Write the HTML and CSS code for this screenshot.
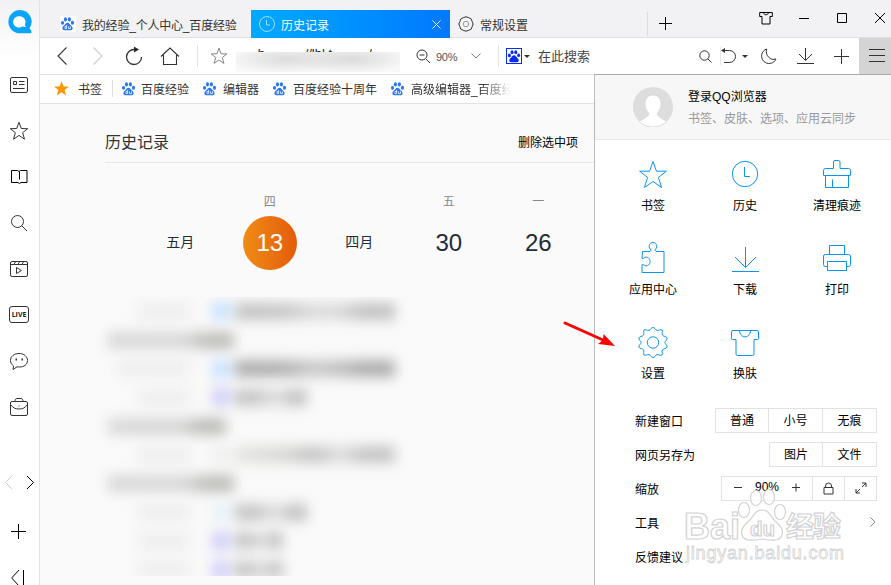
FILE: index.html
```
<!DOCTYPE html>
<html lang="zh-CN">
<head>
    <meta charset="UTF-8">
    <title>历史记录</title>
    <link rel="stylesheet" href="styles.css">
</head>
<body>
    <svg class="symbols" width="0" height="0">
        <symbol id="paw" viewBox="0 0 16 16">
            <ellipse cx="2.7" cy="7.3" rx="1.7" ry="2.1"/>
            <ellipse cx="5.8" cy="3.6" rx="1.7" ry="2.3"/>
            <ellipse cx="10" cy="3.6" rx="1.7" ry="2.3"/>
            <ellipse cx="13.3" cy="7.1" rx="1.7" ry="2.1"/>
            <path d="M8 7.2c-1.8 0-2.4 1.8-3.7 3-1.5 1.3-2 2.2-1.6 3.6.5 1.5 2 1.6 5.3 1.3 3.3.3 4.8.2 5.3-1.3.4-1.4-.1-2.3-1.6-3.6C10.400 9 9.800 7.200 8 7.200z"/>
        </symbol>
        <symbol id="du" viewBox="0 0 16 16">
            <use href="#paw"/>
            <path class="du-lines" d="M7 9.500v4M7 11.200H5.300v2.200H7M9 11v2.400h2.200V11"/>
        </symbol>
        <symbol id="star" viewBox="0 0 20 20">
            <path d="M10 1.300l2.300 6.200 6.400.2-5.100 4 1.900 6.500L10 14.400l-5.500 3.800 1.900-6.500-5.100-4 6.400-.2z"/>
        </symbol>
        <symbol id="magnifier" viewBox="0 0 18 18">
            <circle cx="7.500" cy="7.500" r="6"/>
            <path d="M12 12l5 5"/>
        </symbol>
    </svg>

    <div class="browser">
        <aside class="sidebar">
            <div class="side-logo">
                <svg width="24" height="24" viewBox="0 0 24 24">
                    <path d="M12 0a11.600 11.600 0 0 1 9.500 18.200c.3 1 .9 1.700 1.800 2V23.300H12A11.600 11.600 0 0 1 12 0z" fill="#0ba4f8"/>
                    <path d="M11.800 6.300a5.700 5.700 0 0 1 5 8.400c.2.900.7 1.500 1.500 2-1.300.4-2.600.2-3.800-.4A5.700 5.700 0 1 1 11.800 6.300z" fill="#fff"/>
                </svg>
            </div>
            <div class="side-item"><svg width="20" height="18" viewBox="0 0 20 18"><rect x="1.500" y="1.500" width="17" height="15" rx="1.500"/><path d="M4.500 5.500h3v3h-3zM10 5.500h5.500M10 8.500h5.500M4 12.500h11.500"/></svg></div>
            <div class="side-item"><svg width="20" height="20"><use href="#star"/></svg></div>
            <div class="side-item"><svg class="dark" width="20" height="18" viewBox="0 0 20 18"><path d="M2.500 2.500h6l1.500 1 1.500-1h6.500v12h-6l-1.500 1-1.500-1H2.500zM10.500 3.500v8"/></svg></div>
            <div class="side-item"><svg width="18" height="18"><use href="#magnifier"/></svg></div>
            <div class="side-item"><svg width="20" height="18" viewBox="0 0 20 18"><rect x="1.500" y="1.500" width="17" height="15" rx="1.500"/><path d="M2 4.500h16M5 4l1.500-2M9 4l1.500-2M13 4l1.500-2M7.500 7.500v6l5-3z"/></svg></div>
            <div class="side-item"><span class="live">LIVE</span></div>
            <div class="side-item"><svg width="20" height="20" viewBox="0 0 20 20"><path d="M4 18.500l.6-3.500C2.500 13.500 1.500 11.500 1.500 9.500c0-4 3.500-7 8.500-7s8.500 3 8.500 7-3.500 6.500-8 6.500c-1 0-2 0-2.500-.200z"/><path d="M6.500 8.500h1.500M12.500 8.500H14" stroke-width="1.800"/></svg></div>
            <div class="side-item"><svg width="20" height="20" viewBox="0 0 20 20"><rect x="1.500" y="4.500" width="17" height="14" rx="1.500"/><path d="M6 4.500c0-2 .7-3 2-3h4c1.300 0 2 1 2 3M2 8c2 3 4.500 4 8 4s6-1 8-4M10 8.500v1"/></svg></div>
            <div class="side-arrows">
                <svg class="pale" width="9" height="15" viewBox="0 0 9 15"><path d="M8 1L1.500 7.500 8 14"/></svg>
                <svg class="dark" width="9" height="15" viewBox="0 0 9 15"><path d="M1 1l6.500 6.500L1 14"/></svg>
            </div>
            <div class="side-item add"><svg class="dark" width="15" height="15" viewBox="0 0 15 15"><path d="M7.500 0v15M0 7.500h15"/></svg></div>
            <div class="side-item collapse"><svg class="dark" width="14" height="16" viewBox="0 0 14 16"><path d="M8 0L.700 8 8 16M12.500 0v16"/></svg></div>
        </aside>

        <main class="main">
            <header class="tabs">
                <div class="tab first">
                    <span class="fav"><svg width="15" height="15" class="blue-paw"><use href="#du"/></svg></span>
                    我的经验_个人中心_百度经验
                </div>
                <div class="tab active">
                    <svg width="18" height="18" viewBox="0 0 18 18"><circle cx="9" cy="9" r="7.500"/><path d="M8.500 5v5H12"/></svg>
                    <span>历史记录</span>
                    <svg class="close" width="9" height="9" viewBox="0 0 9 9"><path d="M.5.500l8 8M8.500.500l-8 8"/></svg>
                </div>
                <div class="tab third">
                    <svg width="16" height="16" viewBox="0 0 16 16"><path d="M5.200 1.700L8 .8l2.800.9 2.500 1.400.8 2.300 1.100 2.600-1.100 2.800-.8 2.200-2.500 1.300L8 15.200l-2.800-.9L2.700 13l-.8-2.200L.8 8l1.100-2.600.8-2.300z"/><circle class="inner" cx="8" cy="8" r="2.700"/></svg>
                    常规设置
                </div>
                <div class="new-tab"><svg width="13" height="13" viewBox="0 0 13 13"><path d="M6.500 0v13M0 6.500h13"/></svg></div>
                <div class="window-buttons">
                    <svg width="14" height="14" viewBox="0 0 14 14"><path d="M.700 1.500h12.600v4h-2.300v7.500H3V5.500H.700z"/><path d="M4.500 1.500c.5 3 4.500 3 5 0"/></svg>
                    <svg width="14" height="14" viewBox="0 0 14 14"><path d="M2 7.500h10"/></svg>
                    <svg width="14" height="14" viewBox="0 0 14 14"><path d="M2.500 2.500h9v9h-9z"/></svg>
                    <svg width="14" height="14" viewBox="0 0 14 14"><path d="M2 2l10 10M12 2L2 12"/></svg>
                </div>
            </header>

            <div class="toolbar">
                <div class="nav-btn"><svg width="12" height="18" viewBox="0 0 12 18"><path d="M10.500 .500L2 9l8.500 8.500"/></svg></div>
                <div class="nav-btn"><svg class="pale" width="12" height="18" viewBox="0 0 12 18"><path d="M1.500.500L10 9l-8.500 8.500"/></svg></div>
                <div class="nav-btn"><svg width="18" height="20" viewBox="0 0 18 20"><path d="M9.500 3.500a7.500 7.500 0 1 0 7 7.500" stroke-width="1.300"/><path d="M9.500 1.500l3.500 2-3.500 2z" fill="#111"/></svg></div>
                <div class="nav-btn"><svg width="20" height="18" viewBox="0 0 20 18"><path d="M1 9.500l9-8.500 9 8.500M3.500 8v9.500h13V8"/></svg></div>
                <div class="address">
                    <svg class="grey" width="18" height="18"><use href="#star"/></svg>
                    <div class="url"><span>&nbsp; &nbsp; &nbsp; b.......... //lbl.t......... /</span></div>
                    <svg width="15" height="15" viewBox="0 0 15 15"><circle cx="6" cy="6" r="5"/><path d="M10 10l4 4M3.500 6h5"/></svg>
                    <span class="percent">90%</span>
                    <svg class="grey" width="10" height="6" viewBox="0 0 10 6"><path d="M.500.500L5 5 9.500.500"/></svg>
                </div>
                <div class="search">
                    <span class="engine"><svg width="14" height="14"><use href="#paw"/></svg></span>
                    <span class="caret"></span>
                    <span class="hint">在此搜索</span>
                    <svg width="13" height="13" viewBox="0 0 13 13"><circle cx="5.500" cy="5.500" r="4.700"/><path d="M9 9l3.500 3.500"/></svg>
                </div>
                <div class="tools">
                    <svg width="16" height="16" viewBox="0 0 16 16"><path d="M2 2.500h6.500a5.800 5.800 0 0 1 0 12H3"/><path d="M0 2.500L4 0v5z" fill="#333" stroke="none"/></svg>
                    <span class="caret"></span>
                    <svg class="moon" width="17" height="17" viewBox="0 0 17 17"><path d="M6.500 1a7.500 7.500 0 1 0 9.500 10C10.500 13 5 7.500 6.500 1z"/></svg>
                    <svg class="down" width="18" height="18" viewBox="0 0 18 18"><path d="M8.500 1v12M2 7l6.500 6.500L15 7M0 16.500h17"/></svg>
                    <svg class="plus" width="15" height="15" viewBox="0 0 15 15"><path d="M7.500 0v15M0 7.500h15"/></svg>
                </div>
                <div class="menu-btn"><svg width="16" height="14" viewBox="0 0 16 14"><path d="M0 .500h16M0 6.500h16M0 12.500h16"/></svg></div>
            </div>

            <nav class="bookmarks">
                <div class="bookmark all"><svg class="gold" width="17" height="17"><use href="#star"/></svg>书签</div>
                <div class="bookmark"><svg width="15" height="15" class="blue-paw"><use href="#du"/></svg>百度经验</div>
                <div class="bookmark"><svg width="15" height="15" class="blue-paw"><use href="#du"/></svg>编辑器</div>
                <div class="bookmark"><svg width="15" height="15" class="blue-paw"><use href="#du"/></svg>百度经验十周年</div>
                <div class="bookmark cut"><svg width="15" height="15" class="blue-paw"><use href="#du"/></svg>高级编辑器_百度经</div>
            </nav>

            <section class="history">
                <div class="history-head">
                    <h1>历史记录</h1>
                    <a>删除选中项</a>
                </div>
                <div class="days">
                    <div class="day"><span class="week"></span><span class="month">五月</span></div>
                    <div class="day"><span class="week">四</span><span class="num today">13</span></div>
                    <div class="day"><span class="week"></span><span class="month">四月</span></div>
                    <div class="day"><span class="week">五</span><span class="num">30</span></div>
                    <div class="day"><span class="week">一</span><span class="num">26</span></div>
                </div>
                <div class="records">
                    <div class="record"><i class="time"></i><i class="site"></i><i class="name w160"></i></div>
                    <div class="record"><i class="group"></i></div>
                    <div class="record strong"><i class="time long"></i><i class="site"></i><i class="name w160"></i></div>
                    <div class="record"><i class="time"></i><i class="site violet"></i><i class="name w72"></i></div>
                    <div class="record"><i class="group short"></i></div>
                    <div class="record"><i class="time"></i><i class="site none"></i><i class="name w160 light"></i></div>
                    <div class="record"><i class="group"></i></div>
                    <div class="record"><i class="time"></i><i class="site sky"></i><i class="name w72"></i></div>
                    <div class="record"><i class="time"></i><i class="site violet"></i><i class="name w48"></i></div>
                    <div class="record"><i class="time"></i><i class="site violet"></i><i class="name w48"></i></div>
                </div>
            </section>
        </main>

        <div class="menu">
            <div class="account">
                <svg width="40" height="40" viewBox="0 0 40 40">
                    <circle cx="20" cy="20" r="20" fill="#ddd"/>
                    <path d="M20 8c-5 0-8 3.500-8 9 0 4.500 1.800 6.500 3.500 9 1 2-.5 3.500-9.500 8.300A20 20 0 0 0 34 34.300c-9-4.800-10.500-6.300-9.500-8.300 1.700-2.500 3.500-4.500 3.500-9 0-5.500-3-9-8-9z" fill="#fff" stroke="#ccc" stroke-width=".6"/>
                </svg>
                <div>
                    <p class="login">登录QQ浏览器</p>
                    <p class="sync">书签、皮肤、选项、应用云同步</p>
                </div>
            </div>

            <div class="shortcuts">
                <div class="shortcut"><svg viewBox="0 0 32 32"><path d="M16 2.500l3.400 9.700h10l-8 6.200 3.200 10.100L16 22.500l-8.600 6 3.200-10.100-8-6.200h10z"/></svg>书签</div>
                <div class="shortcut"><svg viewBox="0 0 32 32"><circle cx="16" cy="15" r="12.700"/><path d="M15.500 8v9.500H21"/></svg>历史</div>
                <div class="shortcut"><svg viewBox="0 0 32 32"><path d="M12.500 9.500V3q0-1.500 1.500-1.500h3.500q1.500 0 1.500 1.500v6.500h8.500q2 0 2 2v5H2.500v-5q0-2 2-2zM4.500 16.500v12h23v-12M11.500 20.500v8"/></svg>清理痕迹</div>
                <div class="shortcut"><svg viewBox="0 0 32 32"><path d="M5.500 8.500h7.500c1.500-1 1-2-.5-3.500-1-2.500.500-5.500 3.500-5.500s4.500 3 3.500 5.500c-1.500 1.500-2 2.500-.5 3.500h8v21h-22v-8c1-.500 2 .5 3 1.200 2.500.8 5-1 5-4.200s-2.500-5-5-4.200c-1 .7-2 1.700-3 1.200z"/></svg>应用中心</div>
                <div class="shortcut"><svg viewBox="0 0 32 32"><path d="M16.500 4v20.500M6 14l10.500 10.500L27 14M3 28.500h27"/></svg>下载</div>
                <div class="shortcut"><svg viewBox="0 0 32 32"><path d="M8.500 11.500V2.500h15v9M6.500 23.500h-2q-2 0-2-2V13q0-1.500 2-1.500h23q2 0 2 1.500v8.500q0 2-2 2h-2M6.500 18.500h19v9h-19z"/></svg>打印</div>
                <div class="shortcut"><svg viewBox="0 0 32 32"><path d="M16 .5c1.700 0 2.300 2.400 4 2.900 1.700.3 3.700-1.500 5-.3s-.6 3.200.3 4.900c1 1.600 4.200 1.200 4.800 2.900S27.900 14 27.900 15.500s2.800 2.900 2.200 4.600-3.800 1.300-4.800 2.900c-.9 1.700 1 3.700-.3 4.900s-3.300-.6-5-.3c-1.700.5-2.300 2.900-4 2.900s-2.300-2.400-4-2.900c-1.700-.3-3.700 1.500-5 .3s.6-3.200-.3-4.900c-1-1.600-4.200-1.200-4.800-2.900S4.100 17 4.100 15.500 1.300 12.600 1.900 10.900s3.800-1.300 4.800-2.900C7.600 6.300 5.700 4.300 7 3.100s3.300.6 5 .3c1.700-.5 2.300-2.900 4-2.900z"/><circle cx="16" cy="15.500" r="5.700"/></svg>设置</div>
                <div class="shortcut"><svg viewBox="0 0 32 32"><path d="M4 3.500h24q1.500 0 1.500 1.500v6.500q0 1-1 1h-3.500V27q0 1.500-1.500 1.500h-15Q7 28.500 7 27V12.500H3.500q-1 0-1-1V5q0-1.500 1.500-1.500zM10.500 3.500c.5 8.500 10.500 8.500 11 0"/></svg>换肤</div>
            </div>

            <ul class="options">
                <li>新建窗口<div class="group-btns"><span>普通</span><span>小号</span><span>无痕</span></div></li>
                <li>网页另存为<div class="group-btns"><span>图片</span><span>文件</span></div></li>
                <li>缩放
                    <div class="group-btns">
                        <span class="zoom"><svg width="8" height="9" viewBox="0 0 8 9"><path d="M0 4.500h8"/></svg><b>90%</b><svg width="8" height="9" viewBox="0 0 8 9"><path d="M0 4.500h8M4 .500v8"/></svg></span>
                        <span class="small"><svg width="11" height="13" viewBox="0 0 11 13"><path d="M1 5.500h9v6.500H1zM2.500 5.500V4q0-3 3-3t3 3v1.500"/></svg></span>
                        <span class="small"><svg width="12" height="12" viewBox="0 0 12 12"><path d="M7 1h4v4M11 1L7 5M5 11H1V7M1 11l4-4"/></svg></span>
                    </div>
                </li>
                <li>工具<svg class="more" width="6" height="10" viewBox="0 0 6 10"><path d="M.500.500L5 5 .500 9.500"/></svg></li>
                <li>反馈建议</li>
            </ul>
        </div>

        <svg class="watermark" width="164" height="84" viewBox="0 0 164 84">
            <g class="wm-outline">
                <ellipse cx="62" cy="27" rx="5.500" ry="7.500"/>
                <ellipse cx="74" cy="15" rx="5.500" ry="7.500"/>
                <ellipse cx="87" cy="14" rx="5.500" ry="7.500"/>
                <ellipse cx="98" cy="29" rx="5.500" ry="7.500"/>
                <path d="M80 27c-7 0-8 6-13 11-6 5-9 9-7 14 2 6 9 6 20 4 11 2 18 2 20-4 2-5-1-9-7-14-5-5-6-11-13-11z"/>
                <text x="2" y="56" font-size="36" textLength="56" lengthAdjust="spacingAndGlyphs">Bai</text>
                <text x="68" y="53" font-size="20" textLength="25" lengthAdjust="spacingAndGlyphs">du</text>
                <text x="104" y="54" font-size="28" textLength="55">经验</text>
                <text class="wm-url" x="4" y="76" font-size="18" textLength="158">jingyan.baidu.com</text>
            </g>
        </svg>

        <svg class="arrow" width="54" height="32" viewBox="0 0 54 32">
            <path d="M3 4l38 17" stroke-width="3" stroke-linecap="round"/>
            <path class="head" d="M53 27l-17-2 5-4 .5-6z"/>
        </svg>
    </div>
</body>
</html>
```
FILE: styles.css
```
* {
    margin: 0;
    padding: 0;
    box-sizing: border-box;
}

body {
    font-family: "Liberation Sans", "Noto Sans CJK SC", sans-serif;
    font-size: 12px;
    color: #333;
    background: #fff;
    overflow: hidden;
}

svg {
    display: block;
    flex: none;
    fill: none;
    stroke: #333;
    stroke-width: 1;
}

.symbols {
    position: absolute;
}

svg.dark { stroke: #000; }
svg.grey { stroke: #777; }
svg.pale { stroke: #ccc; }

.blue-paw {
    fill: #2b78f5;
    stroke: none;
}

.du-lines {
    fill: none;
    stroke: #fff;
    stroke-width: .8;
}

.browser {
    position: relative;
    display: flex;
    width: 891px;
    height: 585px;
    overflow: hidden;
}

/* sidebar */
.sidebar {
    width: 40px;
    flex: none;
    border-right: 1px solid #e2e2e2;
    background: linear-gradient(#f2f2f4, #fff 60px);
}

.side-logo {
    height: 62px;
    padding: 10px 0 0 8px;
}

.side-logo svg {
    stroke: none;
}

.side-item {
    height: 46px;
    width: 38px;
    display: flex;
    align-items: center;
    justify-content: center;
}

.live {
    width: 20px;
    height: 17px;
    margin-top: -2px;
    border: 1px solid #333;
    border-radius: 3px;
    font: bold 7px/15px "Open Sans", sans-serif;
    text-align: center;
    color: #222;
}

.side-arrows {
    height: 52px;
    margin-top: 26px;
    padding: 0 4px;
    display: flex;
    align-items: center;
    justify-content: space-between;
}

.side-item.add {
    padding: 1px 1px 0 0;
}

.side-item.collapse {
    height: 48px;
    padding-right: 2px;
}

.main {
    flex: 1;
    min-width: 0;
    display: flex;
    flex-direction: column;
}

/* tabs */
.tabs {
    height: 38px;
    padding-top: 10px;
    display: flex;
    background: #f2f2f4;
    border-bottom: 1px solid #dfdfe1;
}

.tab {
    display: flex;
    align-items: center;
    gap: 6px;
    height: 28px;
    white-space: nowrap;
}

.tab.first {
    width: 211px;
    padding-left: 20px;
    letter-spacing: -.2px;
}

.fav {
    background: #fff;
    width: 16px;
    height: 16px;
}

.tab.active {
    width: 199px;
    padding: 0 9px 0 7px;
    gap: 5px;
    color: #fff;
    background: linear-gradient(90deg, #00aaff, #0078ff);
}

.tab.active svg {
    stroke: #9fdcff;
}

.tab.active .close {
    margin-left: auto;
    stroke: #fff;
}

.tab.third {
    width: 198px;
    height: 24px;
    margin-top: 2px;
    padding-left: 8px;
    border-right: 1px solid #dcdcde;
}

.tab .inner {
    stroke: #999;
}

.new-tab {
    padding: 7px 0 0 11px;
    width: 111px;
}

.new-tab svg,
.window-buttons svg {
    stroke: #000;
}

.window-buttons {
    display: flex;
    gap: 24px;
    padding-top: 1px;
}

/* toolbar */
.toolbar {
    height: 37px;
    display: flex;
    align-items: center;
    padding-left: 4px;
    border-bottom: 1px solid #e2e2e2;
}

.nav-btn {
    width: 36px;
    display: flex;
    justify-content: center;
}

.nav-btn svg {
    stroke-width: 1.1;
}

.address {
    height: 22px;
    width: 302px;
    margin-left: 9px;
    padding-left: 12px;
    display: flex;
    align-items: center;
    border-left: 1px solid #e2e2e2;
    border-right: 1px solid #e2e2e2;
}

.url {
    align-self: flex-start;
    position: relative;
    width: 164px;
    height: 27px;
    margin: 0 16px 0 8px;
    font-size: 13px;
    line-height: 17px;
    white-space: pre;
    color: #222;
}

/* smeared part of the address */
.url::after {
    content: "";
    position: absolute;
    left: 0;
    top: 7px;
    width: 164px;
    height: 20px;
    background: radial-gradient(ellipse 60px 15px at 50px 7px, #dcdcdc, transparent),
        radial-gradient(ellipse 60px 15px at 115px 7px, #dadada, transparent), #f9f9f9;
}

.percent {
    margin: 1px 14px 0 5px;
    font-size: 11px;
    letter-spacing: -.3px;
    color: #555;
}

.search {
    flex: 1;
    display: flex;
    align-items: center;
    padding: 0 8px 0 7px;
}

.engine {
    width: 16px;
    height: 16px;
    border: 1px solid #0a2cf5;
}

.engine svg {
    fill: #0a2cf5;
    stroke: none;
}

.caret {
    border: 3px solid transparent;
    border-top-color: #333;
    border-bottom: 0;
    margin: 0 8px 0 2px;
}

.hint {
    flex: 1;
    margin-top: -2px;
    font-size: 13px;
    color: #444;
}

.tools {
    width: 139px;
    display: flex;
    align-items: center;
    border-left: 1px solid #e8e8e8;
}

.tools .caret {
    margin: 0 12px 0 5px;
}

.tools .moon { margin-right: 20px; }
.tools .down { margin-right: 19px; }

.menu-btn {
    width: 32px;
    height: 36px;
    padding: 11px 0 0 10px;
    background: #d4d4d4;
}

/* bookmarks */
.bookmarks {
    height: 29px;
    display: flex;
    align-items: center;
    padding: 0 0 1px 13px;
    gap: 13px;
    border-bottom: 1px solid #e2e2e2;
}

.bookmark {
    display: flex;
    align-items: center;
    gap: 5px;
    white-space: nowrap;
}

.bookmark + .bookmark + .bookmark {
    gap: 6px;
}

.bookmark.all {
    gap: 8px;
    padding-right: 10px;
    margin-right: -5px;
    border-right: 1px solid #ddd;
}

.gold {
    fill: #ff9500;
    stroke: none;
}

.bookmark.cut {
    -webkit-mask-image: linear-gradient(90deg, #000 92px, transparent 121px);
    mask-image: linear-gradient(90deg, #000 92px, transparent 121px);
}

/* history */
.history {
    flex: 1;
    padding-left: 65px;
    background: #fafafa;
}

.history-head {
    height: 59px;
    padding: 16px 313px 0 0;
    display: flex;
    align-items: center;
    justify-content: space-between;
    border-bottom: 1px solid #e8e8e8;
}

h1 {
    font-size: 16px;
    font-weight: normal;
    color: #333;
}

.history-head a {
    color: #000;
}

.days {
    display: flex;
    padding: 30px 0 0 30.500px;
    height: 134px;
}

.day {
    width: 89.500px;
    display: flex;
    flex-direction: column;
    align-items: center;
}

.week {
    height: 23px;
    line-height: 19px;
    color: #888;
}

.month,
.num {
    width: 54px;
    line-height: 54px;
    text-align: center;
    font-size: 14px;
    color: #222c38;
}

.month {
    line-height: 52px;
}

.num {
    font-size: 24px;
}

.num.today {
    color: #fff;
    border-radius: 50%;
    background: linear-gradient(90deg, #f08c14, #e45c0b);
}

.records {
    height: 279px;
    margin-left: -20px;
    overflow: hidden;
}

.record {
    height: 28.700px;
    padding-left: 20px;
    display: flex;
    align-items: center;
    filter: blur(6.500px);
}

.record i {
    height: 17px;
}

.record .time {
    width: 52px;
    margin: 0 22px 0 33px;
    background: #eee;
}

.record .time.long {
    width: 72px;
    margin-left: 13px;
}

.record .site {
    width: 18px;
    height: 18px;
    margin-right: 5px;
    background: #c7e0ff;
}

.record .site.violet { background: #cfcdf8; }
.record .site.sky { background: #e6f2f9; }
.record .site.none { background: #efefef; }

.record .name {
    background: linear-gradient(90deg, #c2c2c2, #c6c6c6 30%, #dcdcdc 50%, #dadada 65%, #c1c1c1 80%);
}

.record.strong .name {
    background: linear-gradient(90deg, #acacac, #b0b0b0 30%, #cacaca 50%, #c0c0c0 65%, #acacac 80%);
}

.record .name.light {
    background: linear-gradient(90deg, #e4e4e0, #d8d8d5 30%, #c2c3c2 50%, #e0e0e0 66%, #c4c4c4 80%);
}

.w160 { width: 160px; }
.w72 { width: 72px; }
.w48 { width: 48px; }

.record .group {
    width: 126px;
    margin-left: 3px;
    background: linear-gradient(90deg, #d8d8d8 60%, #bcbcb8 80%);
}

.record .group.short {
    width: 118px;
}

/* main menu, opens over the page */
.menu {
    position: absolute;
    right: 0;
    top: 74px;
    width: 297px;
    height: 511px;
    background: #fff;
    border-top: 1px solid #aaa;
    border-left: 1px solid #bbb;
    color: #000;
}

.account {
    height: 65px;
    padding-left: 38px;
    display: flex;
    align-items: center;
    gap: 15px;
    background: #f7f7f7;
    border-bottom: 1px solid #e5e5e5;
}

.account svg {
    stroke: none;
}

.account p {
    line-height: 22px;
}

.account div {
    padding-top: 1px;
}

.account .sync {
    color: #999;
}

.shortcuts {
    display: grid;
    grid-template-columns: repeat(3, 92px);
    grid-auto-rows: 84px;
    padding: 19px 0 0 12px;
    height: 263px;
}

.shortcut {
    display: flex;
    flex-direction: column;
    align-items: center;
    gap: 6px;
    line-height: 18px;
}

.shortcut svg {
    width: 32px;
    height: 32px;
    overflow: visible;
    stroke: #0a95ec;
}

.options {
    list-style: none;
    padding: 0 14px 0 40px;
}

.options li {
    height: 34px;
    display: flex;
    align-items: center;
    justify-content: space-between;
}

.group-btns {
    display: flex;
    height: 25px;
    border: 1px solid #e2e2e2;
}

.group-btns span {
    width: 54px;
    display: flex;
    align-items: center;
    justify-content: center;
    padding-bottom: 2px;
}

.group-btns span:first-child {
    width: 52px;
}

.group-btns span + span {
    border-left: 1px solid #e2e2e2;
}

.group-btns .zoom:first-child {
    width: 90px;
    gap: 13px;
}

.zoom b {
    font-weight: normal;
}

.group-btns .small {
    width: 32px;
    padding-bottom: 0;
}

.more {
    margin-right: 1px;
    stroke: #888;
}

.watermark {
    position: absolute;
    left: 682px;
    top: 483px;
}

.wm-outline {
    fill: rgba(255, 255, 255, .65);
    stroke: #d2d2d2;
    stroke-width: 1.200;
    font-family: "Liberation Sans", "Noto Sans CJK SC", sans-serif;
    font-weight: bold;
}

.wm-url {
    font-weight: normal;
    stroke-width: .8;
}

.arrow {
    position: absolute;
    left: 562px;
    top: 319px;
    stroke: #f00;
}

.arrow .head {
    fill: #f00;
    stroke: none;
}
```
